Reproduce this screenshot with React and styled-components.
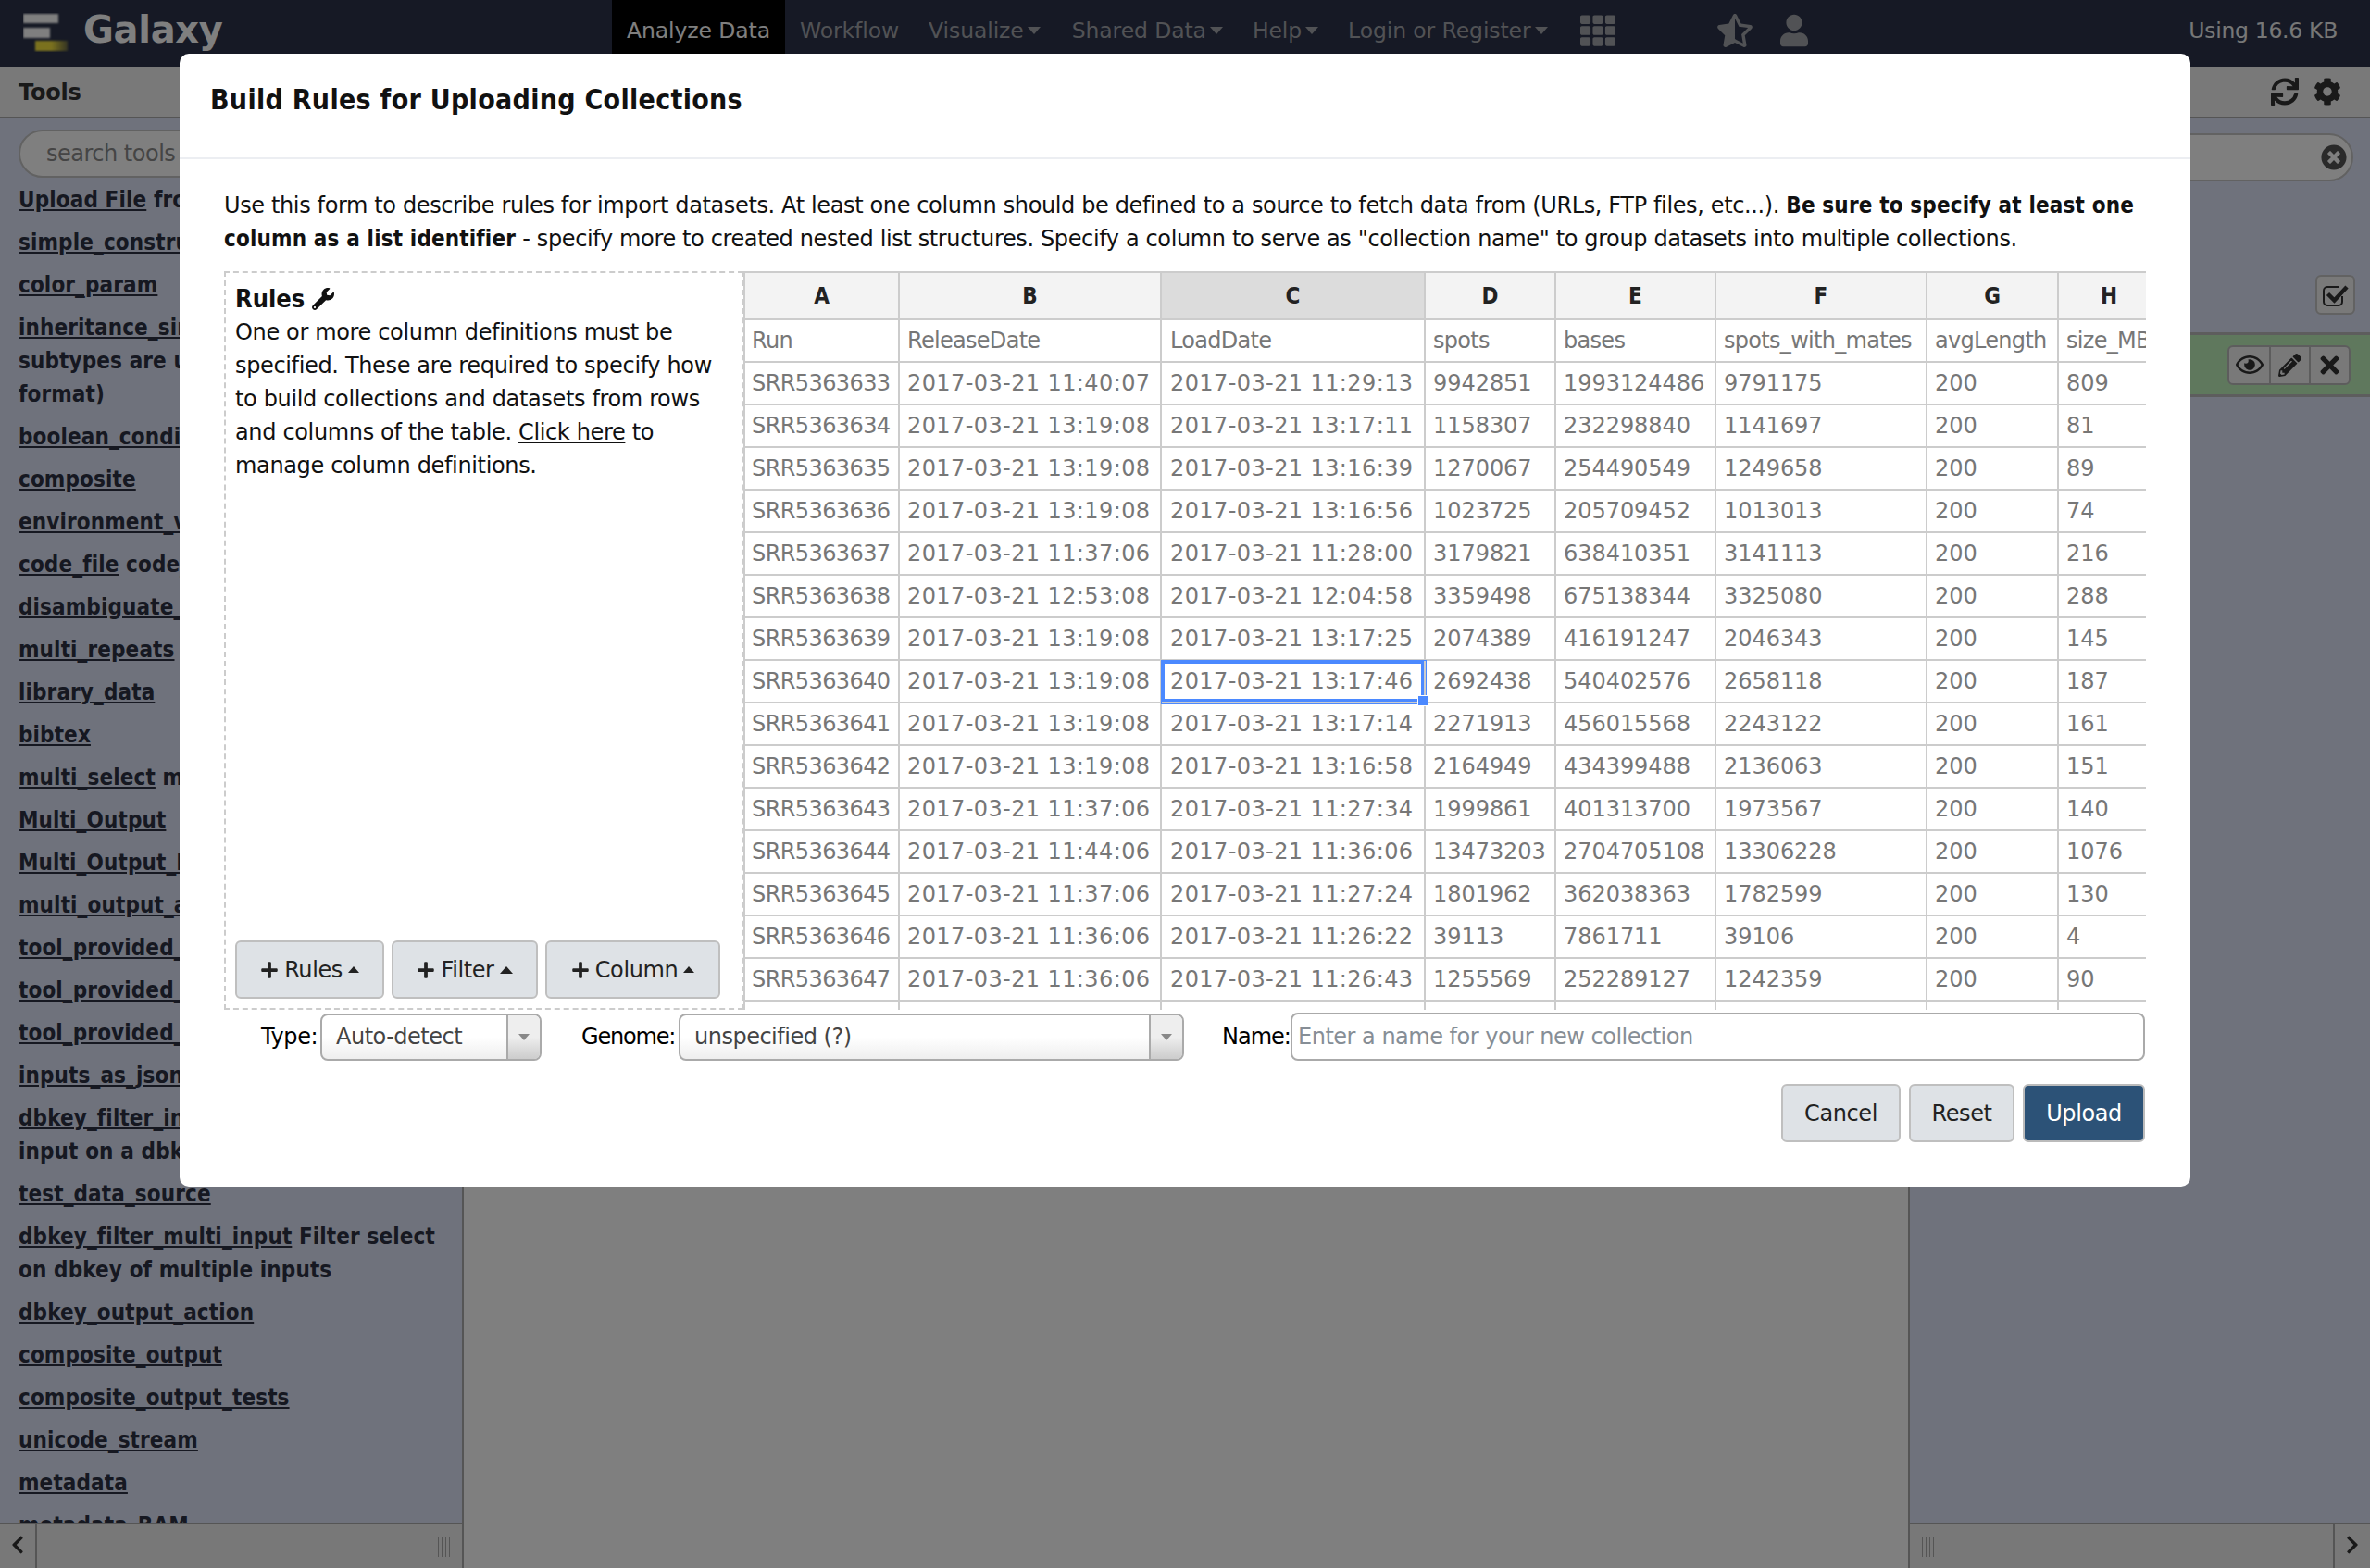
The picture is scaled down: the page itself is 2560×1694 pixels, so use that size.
import React from "react";
import styled, { createGlobalStyle } from "styled-components";
import {
  FaChevronLeft, FaChevronRight, FaCog, FaPencilAlt, FaPlus, FaRegEye,
  FaStarHalfAlt, FaSync, FaTh, FaTimes, FaTimesCircle, FaUser, FaWrench,
} from "react-icons/fa";

const tools = [
  ["Upload File", " from your computer"],
  ["simple_constructs", " Test simple constructs"],
  ["color_param", ""],
  ["inheritance_simple", " Test that the", "subtypes are used for the", "format)"],
  ["boolean_conditional", " Test"],
  ["composite", ""],
  ["environment_variables", " Test"],
  ["code_file", " code_file test tool"],
  ["disambiguate_cond", " Test"],
  ["multi_repeats", " Test"],
  ["library_data", ""],
  ["bibtex", ""],
  ["multi_select", " multi select"],
  ["Multi_Output", ""],
  ["Multi_Output_Empty", ""],
  ["multi_output_assign", ""],
  ["tool_provided_metadata_1", ""],
  ["tool_provided_metadata_2", ""],
  ["tool_provided_metadata_3", ""],
  ["inputs_as_json", " Test"],
  ["dbkey_filter_input", " Filter select on a", "input on a dbkey"],
  ["test_data_source", ""],
  ["dbkey_filter_multi_input", " Filter select", "on dbkey of multiple inputs"],
  ["dbkey_output_action", ""],
  ["composite_output", ""],
  ["composite_output_tests", ""],
  ["unicode_stream", ""],
  ["metadata", ""],
  ["metadata_BAM", ""],
];

const columns = ["A", "B", "C", "D", "E", "F", "G", "H"];
const widths = [169, 283, 285, 141, 173, 228, 142, 110];

const rows = [
  ["Run", "ReleaseDate", "LoadDate", "spots", "bases", "spots_with_mates", "avgLength", "size_MB"],
  ["SRR5363633", "2017-03-21 11:40:07", "2017-03-21 11:29:13", "9942851", "1993124486", "9791175", "200", "809"],
  ["SRR5363634", "2017-03-21 13:19:08", "2017-03-21 13:17:11", "1158307", "232298840", "1141697", "200", "81"],
  ["SRR5363635", "2017-03-21 13:19:08", "2017-03-21 13:16:39", "1270067", "254490549", "1249658", "200", "89"],
  ["SRR5363636", "2017-03-21 13:19:08", "2017-03-21 13:16:56", "1023725", "205709452", "1013013", "200", "74"],
  ["SRR5363637", "2017-03-21 11:37:06", "2017-03-21 11:28:00", "3179821", "638410351", "3141113", "200", "216"],
  ["SRR5363638", "2017-03-21 12:53:08", "2017-03-21 12:04:58", "3359498", "675138344", "3325080", "200", "288"],
  ["SRR5363639", "2017-03-21 13:19:08", "2017-03-21 13:17:25", "2074389", "416191247", "2046343", "200", "145"],
  ["SRR5363640", "2017-03-21 13:19:08", "2017-03-21 13:17:46", "2692438", "540402576", "2658118", "200", "187"],
  ["SRR5363641", "2017-03-21 13:19:08", "2017-03-21 13:17:14", "2271913", "456015568", "2243122", "200", "161"],
  ["SRR5363642", "2017-03-21 13:19:08", "2017-03-21 13:16:58", "2164949", "434399488", "2136063", "200", "151"],
  ["SRR5363643", "2017-03-21 11:37:06", "2017-03-21 11:27:34", "1999861", "401313700", "1973567", "200", "140"],
  ["SRR5363644", "2017-03-21 11:44:06", "2017-03-21 11:36:06", "13473203", "2704705108", "13306228", "200", "1076"],
  ["SRR5363645", "2017-03-21 11:37:06", "2017-03-21 11:27:24", "1801962", "362038363", "1782599", "200", "130"],
  ["SRR5363646", "2017-03-21 11:36:06", "2017-03-21 11:26:22", "39113", "7861711", "39106", "200", "4"],
  ["SRR5363647", "2017-03-21 11:36:06", "2017-03-21 11:26:43", "1255569", "252289127", "1242359", "200", "90"],
  ["", "", "", "", "", "", "", ""],
];

// tweak tracking per column so the DejaVu text lands on the same widths
const cellSpacing = (r, i) => {
  if (r === 0) return "-0.7px";
  if (i === 0) return "-0.6px";
  if (i === 1 || i === 2) return "0.4px";
  return "-0.05px";
};

const Global = createGlobalStyle`
  html, body { margin: 0; padding: 0; height: 100%; overflow: hidden; }
  body { font-family: "DejaVu Sans", sans-serif; font-size: 24px; line-height: 36px; color: #333; }
  * { box-sizing: border-box; }
`;

const Page = styled.div`
  width: 2560px;
  height: 1694px;
  display: flex;
  flex-direction: column;
  overflow: hidden;
`;

const Nav = styled.div`
  height: 72px;
  flex: none;
  display: flex;
  align-items: flex-start;
  background: #2c334a;
`;

const Brand = styled.div`
  width: 661px;
  height: 72px;
  display: flex;
  padding: 3px 0 0 25px;
  gap: 15px;
  align-items: flex-start;
`;

const BrandName = styled.span`
  font-size: 40px;
  font-weight: bold;
  line-height: 58px;
  color: #fff;
  letter-spacing: -0.3px;
`;

const LogoMark = styled.svg`
  width: 50px;
  height: 42px;
  margin-top: 11px;
  flex: none;
`;

const NavItem = styled.div`
  height: 66px;
  display: flex;
  align-items: center;
  gap: 4px;
  padding: 0 ${(p) => p.$padRight || 16}px 0 16px;
  margin-left: ${(p) => p.$shift || 0}px;
  font-size: 23.5px;
  letter-spacing: -0.1px;
  color: ${(p) => (p.$active ? "#fff" : "#a3a5aa")};
  background: ${(p) => (p.$active ? "#000" : "transparent")};
  white-space: nowrap;
`;

const Caret = styled.i`
  width: 0;
  height: 0;
  border-left: ${(p) => p.$size || 6}px solid transparent;
  border-right: ${(p) => p.$size || 6}px solid transparent;
  ${(p) => (p.$up ? "border-bottom" : "border-top")}: ${(p) => (p.$size || 6) + 1}px solid ${(p) => p.$color || "#a3a5aa"};
`;

const NavIcons = styled.div`
  display: flex;
  align-items: center;
  height: 66px;
  color: #a3a5aa;
  margin-left: 17px;
`;

const GridIcon = styled(FaTh)`
  width: 42px;
  height: 38px;
  margin-right: 108px;
`;

const StarIcon = styled(FaStarHalfAlt)`
  width: 38px;
  height: 36px;
  margin-right: 30px;
`;

const UserIcon = styled(FaUser)`
  width: 30px;
  height: 36px;
`;

const Quota = styled.div`
  margin-left: auto;
  margin-right: 35px;
  line-height: 66px;
  font-size: 23.5px;
  letter-spacing: -0.3px;
  color: #eee;
`;

const Columns = styled.div`
  flex: 1;
  display: flex;
  min-height: 0;
`;

const SidePanel = styled.div`
  width: ${(p) => p.$width}px;
  flex: none;
  display: flex;
  flex-direction: column;
  background: #dfe5f9;
  ${(p) => (p.$right ? "border-left" : "border-right")}: 2px solid #aaa;
`;

const Center = styled.div`
  flex: 1;
  background: #fff;
`;

const PanelHead = styled.div`
  height: 56px;
  flex: none;
  display: flex;
  align-items: center;
  justify-content: space-between;
  padding: 2px 20px 0;
  background: #f2f2f2;
  border-bottom: 2px solid #aaa;
  font-weight: bold;
  font-size: 24px;
  letter-spacing: -0.2px;
  color: #333;
`;

const HeadIcons = styled.div`
  display: flex;
  align-items: center;
  margin-left: auto;
  gap: 16px;
  margin-right: 11px;
  margin-top: -2px;
  color: #333;
  font-size: 30px;
  height: 30px;
`;

const SearchWrap = styled.div`
  position: relative;
  margin: ${(p) => (p.$right ? "16px 18px 0 20px" : "12px 20px 0")};
  flex: none;
`;

const SearchInput = styled.input`
  width: 100%;
  height: 52px;
  display: block;
  border: 2px solid #c4c4c4;
  border-radius: 26px;
  background: #fff;
  padding: 0 28px;
  font: 24px "DejaVu Sans", sans-serif;
  letter-spacing: -0.5px;
  outline: none;
  &::placeholder { color: #8a8a8a; opacity: 1; }
`;

const ClearIcon = styled(FaTimesCircle)`
  position: absolute;
  right: 7px;
  top: 12px;
  width: 28px;
  height: 28px;
  color: #555;
`;

const ToolList = styled.div`
  flex: 1;
  min-height: 0;
  overflow: hidden;
  padding: 6px 20px 0;
`;

const ToolItem = styled.div`
  margin-bottom: 10px;
  font-family: "DejaVu Sans Condensed", "DejaVu Sans", sans-serif;
  font-weight: bold;
  color: #2c3143;
  white-space: nowrap;
  letter-spacing: 0.12px;
  a { color: inherit; text-decoration: underline; }
`;

const BottomBar = styled.div`
  height: 49px;
  flex: none;
  display: flex;
  align-items: center;
  background: #f0f0f0;
  border-top: 2px solid #aaa;
  color: #333;
`;

const BarToggle = styled.div`
  width: 40px;
  height: 100%;
  flex: none;
  display: flex;
  align-items: center;
  justify-content: center;
  font-size: 22px;
  padding-bottom: 4px;
  ${(p) => (p.$right ? "border-left" : "border-right")}: 2px solid #aaa;
`;

const Grip = styled.div`
  width: 15px;
  height: 21px;
  margin: 2px ${(p) => (p.$right ? "auto" : "11px")} 0 ${(p) => (p.$right ? "13px" : "auto")};
  background: repeating-linear-gradient(90deg, #aaa 0 1.5px, transparent 1.5px 4px);
`;

const CheckBtn = styled.div`
  align-self: flex-end;
  width: 43px;
  height: 43px;
  margin: 101px 16px 19px 0;
  display: flex;
  align-items: center;
  justify-content: center;
  border: 2px solid #c4c4c4;
  border-radius: 6px;
  background: #f2f2f2;
  color: #333;
`;

const CheckMark = styled.svg`
  width: 29px;
  height: 26px;
  fill: none;
  stroke: currentColor;
`;

const DatasetRow = styled.div`
  height: 70px;
  display: flex;
  align-items: center;
  justify-content: flex-end;
  padding-right: 21px;
  background: #bff0ba;
  border-top: 3px solid #bbb;
  border-bottom: 3px solid #bbb;
`;

const IconGroup = styled.div`
  display: flex;
  height: 43px;
  border: 2px solid #bbb;
  border-radius: 6px;
  background: #f2f2f2;
  color: #333;
`;

const IconCell = styled.div`
  width: 43px;
  display: flex;
  align-items: center;
  justify-content: center;
  font-size: ${(p) => p.$size}px;
  & + & { border-left: 2px solid #bbb; }
`;

const Spacer = styled.div`
  flex: 1;
`;

const Backdrop = styled.div`
  position: fixed;
  inset: 0;
  display: flex;
  justify-content: center;
  align-items: flex-start;
  padding-top: 58px;
  background: rgba(0, 0, 0, 0.5);
`;

const Modal = styled.div`
  width: 2172px;
  height: 1224px;
  background: #fff;
  border-radius: 10px;
  color: #000;
`;

const ModalHead = styled.div`
  height: 114px;
  padding: 30px 33px 0;
  border-bottom: 2px solid #eceef2;
`;

const Title = styled.h1`
  margin: 0;
  font-family: "DejaVu Sans Condensed", "DejaVu Sans", sans-serif;
  font-size: 30px;
  line-height: 40px;
  font-weight: bold;
  letter-spacing: 0.3px;
  color: #111;
`;

const ModalBody = styled.div`
  padding: 32px 48px 0;
`;

const Intro = styled.p`
  margin: 0 0 17px;
  height: 72px;
  white-space: nowrap;
  letter-spacing: -0.37px;
  color: #111;
  b {
    font-family: "DejaVu Sans Condensed", "DejaVu Sans", sans-serif;
    letter-spacing: 0.15px;
  }
`;

const Workspace = styled.div`
  display: flex;
  height: 798px;
`;

const RulesPanel = styled.div`
  width: 561px;
  flex: none;
  display: flex;
  flex-direction: column;
  padding: 10px;
  border: 2px dashed #ccc;
  letter-spacing: -0.35px;
  color: #111;
`;

const RulesTitle = styled.div`
  display: flex;
  align-items: center;
  gap: 8px;
  font-family: "DejaVu Sans Condensed", "DejaVu Sans", sans-serif;
  font-weight: bold;
  font-size: 27px;
  letter-spacing: 0;
`;

const RulesLink = styled.a`
  color: inherit;
  text-decoration: underline;
`;

const RuleButtons = styled.div`
  display: flex;
  gap: 8px;
  margin-top: auto;
`;

const RuleButton = styled.div`
  width: ${(p) => p.$width}px;
  height: 63px;
  display: flex;
  align-items: center;
  justify-content: center;
  gap: 6px;
  background: #dee2e6;
  border: 2px solid #bfbfbf;
  border-radius: 6px;
  color: #222;
  letter-spacing: -0.4px;
  svg { font-size: 20px; }
`;

const GridWrap = styled.div`
  flex: 1;
  min-width: 0;
  overflow: hidden;
`;

const Grid = styled.table`
  border-collapse: separate;
  border-spacing: 0;
  table-layout: fixed;
  width: 1531px;
`;

const HeadCell = styled.th`
  height: 53px;
  padding: 0;
  background: ${(p) => (p.$selected ? "#dcdcdc" : "#f3f3f3")};
  border-top: 2px solid #ccc;
  border-bottom: 2px solid #ccc;
  border-right: 2px solid #ccc;
  ${(p) => p.$first && "border-left: 2px solid #ccc;"}
  color: #222;
  font-family: "DejaVu Sans Condensed", "DejaVu Sans", sans-serif;
  font-size: 24px;
`;

const Cell = styled.td`
  position: relative;
  height: 46px;
  padding: 0 0 0 ${(p) => p.$pad}px;
  background: #fff;
  border-bottom: 2px solid #ccc;
  border-right: 2px solid #ccc;
  ${(p) => p.$first && "border-left: 2px solid #ccc;"}
  color: #777;
  font-size: 24px;
  line-height: 40px;
  white-space: nowrap;
  overflow: hidden;
  letter-spacing: ${(p) => p.$spacing};
  ${(p) => p.$active && "overflow: visible; box-shadow: inset 0 0 0 3px #4b89ff, 0 0 0 1px #4b89ff; z-index: 1;"}
`;

const CellHandle = styled.span`
  position: absolute;
  right: -5px;
  bottom: -5px;
  width: 12px;
  height: 12px;
  background: #4b89ff;
  border: 1px solid #fff;
`;

const FieldRow = styled.div`
  display: flex;
  align-items: center;
  height: 54px;
  margin-top: 2px;
  padding-left: 40px;
  color: #000;
`;

const FieldLabel = styled.span`
  width: ${(p) => p.$width}px;
  margin-left: ${(p) => p.$left || 0}px;
  flex: none;
  letter-spacing: ${(p) => p.$spacing};
  white-space: nowrap;
`;

const SelectBox = styled.div`
  width: ${(p) => p.$width}px;
  height: 51px;
  flex: none;
  display: flex;
  border: 2px solid #aaa;
  border-radius: 8px;
  background: linear-gradient(#fff 50%, #eee);
  overflow: hidden;
  letter-spacing: -0.5px;
  color: #444;
`;

const SelectValue = styled.span`
  flex: 1;
  padding-left: 15px;
  line-height: 46px;
`;

const SelectArrow = styled.span`
  width: 36px;
  flex: none;
  display: flex;
  align-items: center;
  justify-content: center;
  border-left: 2px solid #aaa;
  background: linear-gradient(#eee 50%, #ccc);
`;

const NameInput = styled.input`
  flex: 1;
  min-width: 0;
  height: 52px;
  margin-right: 1px;
  padding: 0 6px;
  border: 2px solid #aaa;
  border-radius: 8px;
  background: #fff;
  font: 24px "DejaVu Sans", sans-serif;
  letter-spacing: -0.5px;
  outline: none;
  &::placeholder { color: #868e96; opacity: 1; }
`;

const Actions = styled.div`
  display: flex;
  justify-content: flex-end;
  gap: 9px;
  margin: 24px 1px 0 0;
`;

const ActionButton = styled.div`
  width: ${(p) => p.$width}px;
  height: 63px;
  display: flex;
  align-items: center;
  justify-content: center;
  border: 2px solid ${(p) => (p.$primary ? "#bbb" : "#bfbfbf")};
  border-radius: 6px;
  background: ${(p) => (p.$primary ? "#2c5277" : "#dee2e6")};
  color: ${(p) => (p.$primary ? "#fff" : "#222")};
  letter-spacing: -0.4px;
`;

function Logo() {
  return (
    <LogoMark viewBox="0 0 50 42">
      <defs>
        <filter id="soft"><feGaussianBlur stdDeviation="0.8" /></filter>
        <linearGradient id="gold">
          <stop offset="0.5" stopColor="#f5e23c" />
          <stop offset="1" stopColor="#f5e23c" stopOpacity="0.3" />
        </linearGradient>
      </defs>
      <g filter="url(#soft)">
        <rect x="0" y="1" width="38" height="10" fill="#fff" />
        <rect x="0" y="16" width="29" height="11" fill="#fff" />
        <rect x="13" y="30" width="35" height="11" fill="url(#gold)" />
      </g>
    </LogoMark>
  );
}

function Tool({ tool }) {
  const [name, rest, ...more] = tool;
  return (
    <ToolItem>
      <a href="#tool">{name}</a>
      {rest}
      {more.map((line) => (
        <div key={line}>{line}</div>
      ))}
    </ToolItem>
  );
}

export default function App() {
  return (
    <Page>
      <Global />
      <Nav>
        <Brand>
          <Logo />
          <BrandName>Galaxy</BrandName>
        </Brand>
        <NavItem $active>Analyze Data</NavItem>
        <NavItem>Workflow</NavItem>
        <NavItem $padRight={18}>Visualize<Caret $size={7} /></NavItem>
        <NavItem>Shared Data<Caret $size={7} /></NavItem>
        <NavItem>Help<Caret $size={7} /></NavItem>
        <NavItem>Login or Register<Caret $size={7} /></NavItem>
        <NavIcons>
          <GridIcon />
          <StarIcon />
          <UserIcon />
        </NavIcons>
        <Quota>Using 16.6 KB</Quota>
      </Nav>

      <Columns>
        <SidePanel $width={501}>
          <PanelHead>Tools</PanelHead>
          <SearchWrap>
            <SearchInput placeholder="search tools" />
          </SearchWrap>
          <ToolList>
            {tools.map((t) => (
              <Tool key={t[0]} tool={t} />
            ))}
          </ToolList>
          <BottomBar>
            <BarToggle><FaChevronLeft /></BarToggle>
            <Grip />
          </BottomBar>
        </SidePanel>

        <Center />

        <SidePanel $width={499} $right>
          <PanelHead>
            <HeadIcons>
              <FaSync />
              <FaCog />
            </HeadIcons>
          </PanelHead>
          <SearchWrap $right>
            <SearchInput />
            <ClearIcon />
          </SearchWrap>
          <CheckBtn>
            <CheckMark viewBox="0 0 29 26">
              <path d="M22 14v6a4 4 0 0 1-4 4H6a4 4 0 0 1-4-4V8a4 4 0 0 1 4-4h13" strokeWidth="2" />
              <path d="M6.5 11.5l7 7L27 4" strokeWidth="4.5" />
            </CheckMark>
          </CheckBtn>
          <DatasetRow>
            <IconGroup>
              <IconCell $size={30}><FaRegEye /></IconCell>
              <IconCell $size={25}><FaPencilAlt /></IconCell>
              <IconCell $size={29}><FaTimes /></IconCell>
            </IconGroup>
          </DatasetRow>
          <Spacer />
          <BottomBar>
            <Grip $right />
            <BarToggle $right><FaChevronRight /></BarToggle>
          </BottomBar>
        </SidePanel>
      </Columns>

      <Backdrop>
        <Modal>
          <ModalHead>
            <Title>Build Rules for Uploading Collections</Title>
          </ModalHead>
          <ModalBody>
            <Intro>
              Use this form to describe rules for import datasets. At least one column should be defined to a source to fetch data from (URLs, FTP files, etc...). <b>Be sure to specify at least one</b>
              <br />
              <b>column as a list identifier</b> - specify more to created nested list structures. Specify a column to serve as "collection name" to group datasets into multiple collections.
            </Intro>
            <Workspace>
              <RulesPanel>
                <RulesTitle>Rules <FaWrench size={24} /></RulesTitle>
                <div>
                  One or more column definitions must be specified. These are required to specify how to build collections and datasets from rows and columns of the table. <RulesLink href="#rules">Click here</RulesLink> to manage column definitions.
                </div>
                <RuleButtons>
                  <RuleButton $width={161}><FaPlus />Rules<Caret $up $size={6} $color="#222" /></RuleButton>
                  <RuleButton $width={158}><FaPlus />Filter<Caret $up $size={7} $color="#222" /></RuleButton>
                  <RuleButton $width={189}><FaPlus />Column<Caret $up $size={6} $color="#222" /></RuleButton>
                </RuleButtons>
              </RulesPanel>
              <GridWrap>
                <Grid>
                  <colgroup>
                    {widths.map((w, i) => (
                      <col key={i} style={{ width: w }} />
                    ))}
                  </colgroup>
                  <thead>
                    <tr>
                      {columns.map((c, i) => (
                        <HeadCell key={c} $first={i === 0} $selected={c === "C"}>{c}</HeadCell>
                      ))}
                    </tr>
                  </thead>
                  <tbody>
                    {rows.map((row, r) => (
                      <tr key={r}>
                        {row.map((v, i) => (
                          <Cell
                            key={i}
                            $first={i === 0}
                            $active={r === 8 && i === 2}
                            $pad={i === 0 ? 7 : i === 2 ? 9 : 8}
                            $spacing={cellSpacing(r, i)}
                          >
                            {v}
                            {r === 8 && i === 2 && <CellHandle />}
                          </Cell>
                        ))}
                      </tr>
                    ))}
                  </tbody>
                </Grid>
              </GridWrap>
            </Workspace>
            <FieldRow>
              <FieldLabel $width={64} $spacing="-0.4px">Type:</FieldLabel>
              <SelectBox $width={239}>
                <SelectValue>Auto-detect</SelectValue>
                <SelectArrow><Caret $size={6} $color="#888" /></SelectArrow>
              </SelectBox>
              <FieldLabel $width={105} $left={43} $spacing="-1.2px">Genome:</FieldLabel>
              <SelectBox $width={546}>
                <SelectValue>unspecified (?)</SelectValue>
                <SelectArrow><Caret $size={6} $color="#888" /></SelectArrow>
              </SelectBox>
              <FieldLabel $width={74} $left={41} $spacing="-1px">Name:</FieldLabel>
              <NameInput placeholder="Enter a name for your new collection" />
            </FieldRow>
            <Actions>
              <ActionButton $width={129}>Cancel</ActionButton>
              <ActionButton $width={114}>Reset</ActionButton>
              <ActionButton $width={132} $primary>Upload</ActionButton>
            </Actions>
          </ModalBody>
        </Modal>
      </Backdrop>
    </Page>
  );
}
